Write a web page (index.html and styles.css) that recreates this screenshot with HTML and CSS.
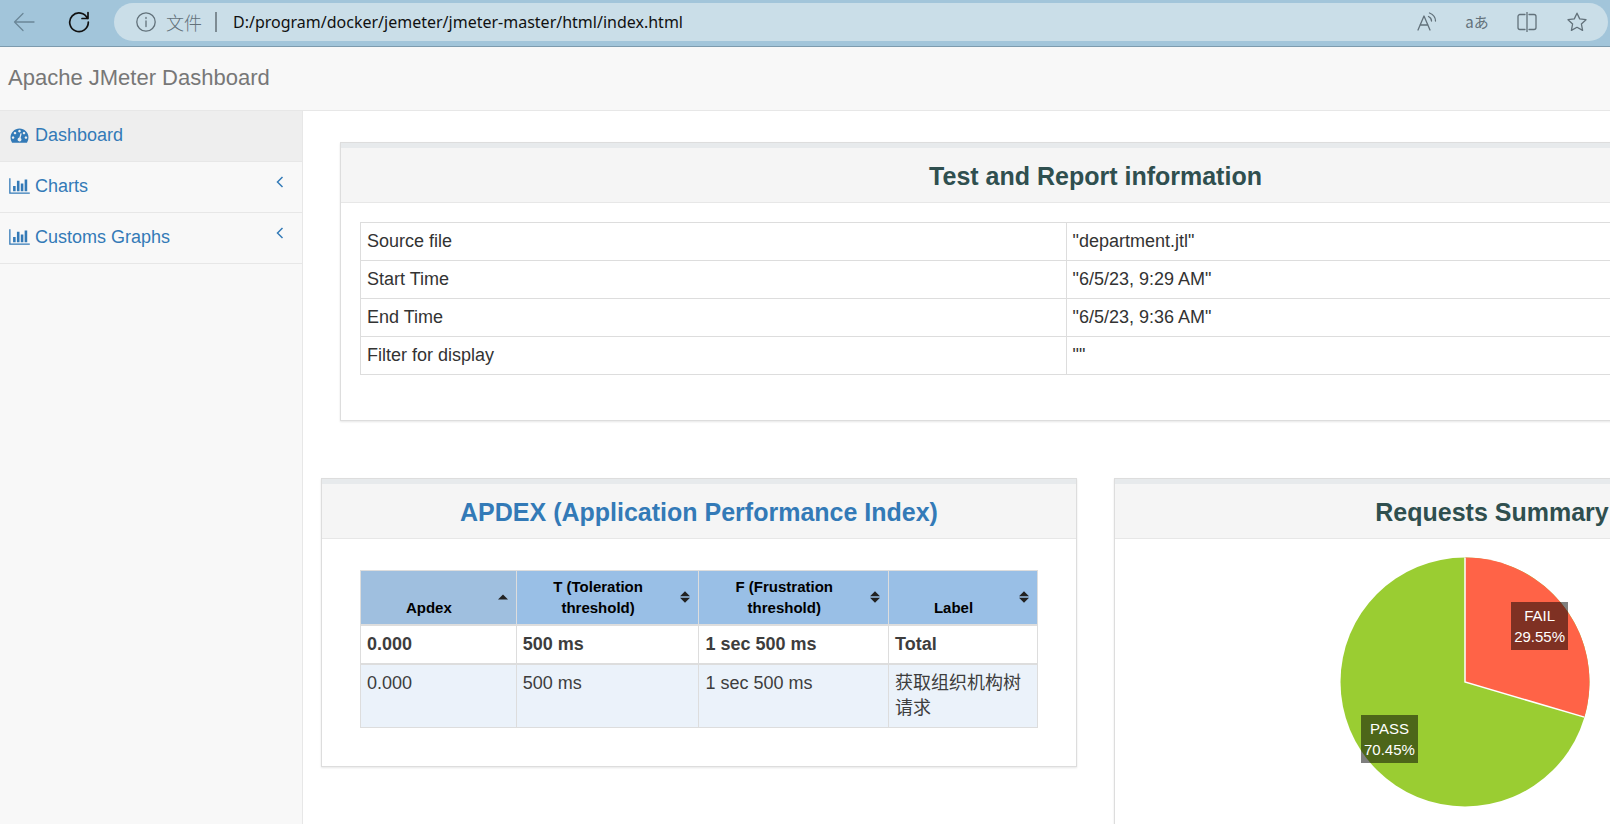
FILE: index.html
```
<!DOCTYPE html>
<html lang="en">
<head>
    <meta charset="UTF-8">
    <meta name="viewport" content="width=device-width, initial-scale=1.0">
    <title>Apache JMeter Dashboard</title>
    <link rel="stylesheet" href="styles.css">
</head>
<body>
    <!-- Browser toolbar -->
    <div class="toolbar">
        <button type="button" class="tool-btn back" aria-label="Back">
            <svg width="22" height="22" viewBox="0 0 22 22"><path d="M21 11H1.500M10 2.500L1.500 11l8.500 8.500"/></svg>
        </button>
        <button type="button" class="tool-btn reload" aria-label="Refresh">
            <svg width="22" height="22" viewBox="0 0 22 22"><path d="M19.500 7.500A9.300 9.300 0 1 0 20.300 11M20 1.500V7.500H14"/></svg>
        </button>
        <div class="address">
            <svg class="info" width="20" height="20" viewBox="0 0 20 20"><circle cx="10" cy="10" r="9.200"/><path d="M10 9v5.500M10 5.500v1"/></svg>
            <label for="url" class="scheme" lang="zh-CN">文件</label>
            <input id="url" type="text" value="D:/program/docker/jemeter/jmeter-master/html/index.html">
            <div class="address-tools">
                <button type="button" class="tool-btn" aria-label="Read aloud">
                    <svg width="20" height="20" viewBox="0 0 20 20"><path d="M1 18L7 4l6 14M3 13h8M11.500 4.500q3 1.500 3 4.500M12.500 1q6 2.500 6 8"/></svg>
                </button>
                <button type="button" class="tool-btn translate" aria-label="Translate">aあ</button>
                <button type="button" class="tool-btn" aria-label="Split screen">
                    <svg width="20" height="20" viewBox="0 0 20 20"><path d="M10 0v20M8 2.500H3a2 2 0 0 0-2 2v11a2 2 0 0 0 2 2h5M12 2.500h5a2 2 0 0 1 2 2v11a2 2 0 0 1-2 2h-5"/></svg>
                </button>
                <button type="button" class="tool-btn" aria-label="Add to favorites">
                    <svg width="20" height="20" viewBox="0 0 20 20"><path d="M10 1.200l2.700 5.700 6.300.8-4.600 4.300 1.200 6.400L10 15.300l-5.600 3.100 1.200-6.400L1 7.700l6.300-.8z"/></svg>
                </button>
            </div>
        </div>
    </div>

    <header class="navbar">
        <a href="index.html" class="brand">Apache JMeter Dashboard</a>
    </header>

    <div class="wrapper">
        <nav class="sidebar">
            <ul>
                <li>
                    <a href="index.html" class="active">
                        <svg class="fa" width="18" height="18" viewBox="0 0 1792 1792"><path d="M384 1152q0-53-37.500-90.500t-90.500-37.500-90.500 37.500-37.500 90.500 37.500 90.500 90.500 37.500 90.500-37.500 37.500-90.500zm192-448q0-53-37.500-90.500t-90.500-37.500-90.500 37.500-37.500 90.500 37.500 90.500 90.500 37.500 90.500-37.500 37.500-90.500zm428 481l101-382q6-26-7.500-48.500t-38.500-29.500-48 6.500-30 39.500l-101 382q-60 5-107 43.500t-63 98.500q-20 77 20 146t117 89 146-20 89-117q16-60-6-117t-72-91zm660-33q0-53-37.500-90.500t-90.500-37.500-90.500 37.500-37.500 90.500 37.500 90.500 90.500 37.500 90.500-37.500 37.500-90.500zm-640-640q0-53-37.500-90.500t-90.500-37.500-90.500 37.500-37.500 90.500 37.500 90.500 90.500 37.500 90.500-37.500 37.500-90.500zm448 192q0-53-37.500-90.500t-90.500-37.500-90.500 37.500-37.500 90.500 37.500 90.500 90.500 37.500 90.500-37.500 37.500-90.500zm320 448q0 261-141 483-19 29-54 29h-1402q-35 0-54-29-141-221-141-483 0-182 71-348t191-286 286-191 348-71 348 71 286 191 191 286 71 348z"/></svg>
                        <span>Dashboard</span>
                    </a>
                </li>
                <li>
                    <a href="#charts">
                        <svg class="fa" width="21" height="18" viewBox="0 0 2048 1792"><path d="M640 896v512h-256v-512h256zm384-512v1024h-256v-1024h256zm1024 1152v128h-2048v-1536h128v1408h1920zm-640-896v768h-256v-768h256zm384-384v1152h-256v-1152h256z"/></svg>
                        <span>Charts</span>
                        <svg class="arrow" width="8" height="12" viewBox="0 0 8 12"><path d="M6.500 1L1.500 6l5 5"/></svg>
                    </a>
                </li>
                <li>
                    <a href="#customs">
                        <svg class="fa" width="21" height="18" viewBox="0 0 2048 1792"><path d="M640 896v512h-256v-512h256zm384-512v1024h-256v-1024h256zm1024 1152v128h-2048v-1536h128v1408h1920zm-640-896v768h-256v-768h256zm384-384v1152h-256v-1152h256z"/></svg>
                        <span>Customs Graphs</span>
                        <svg class="arrow" width="8" height="12" viewBox="0 0 8 12"><path d="M6.500 1L1.500 6l5 5"/></svg>
                    </a>
                </li>
            </ul>
        </nav>

        <main class="page">
            <section class="panel info-panel">
                <h2 class="panel-title">Test and Report information</h2>
                <div class="panel-body">
                    <table class="table info-table">
                        <tbody>
                            <tr><td>Source file</td><td>"department.jtl"</td></tr>
                            <tr><td>Start Time</td><td>"6/5/23, 9:29 AM"</td></tr>
                            <tr><td>End Time</td><td>"6/5/23, 9:36 AM"</td></tr>
                            <tr><td>Filter for display</td><td>""</td></tr>
                        </tbody>
                    </table>
                </div>
            </section>

            <div class="row">
                <section class="panel apdex-panel">
                    <h2 class="panel-title"><a href="#apdex">APDEX (Application Performance Index)</a></h2>
                    <div class="panel-body">
                        <table class="table apdex-table" id="apdex">
                            <colgroup>
                                <col class="col-apdex">
                                <col class="col-t">
                                <col class="col-f">
                                <col class="col-label">
                            </colgroup>
                            <thead>
                                <tr>
                                    <th class="sorted"><div class="sort"><span>Apdex</span><svg width="10" height="12" viewBox="0 0 10 12"><path d="M0 8.500L5 3.500l5 5z"/></svg></div></th>
                                    <th><div class="sort"><span>T (Toleration threshold)</span><svg width="10" height="12" viewBox="0 0 10 12"><path d="M0 5.300L5 .3l5 5zM0 6.700h10l-5 5z"/></svg></div></th>
                                    <th><div class="sort"><span>F (Frustration threshold)</span><svg width="10" height="12" viewBox="0 0 10 12"><path d="M0 5.300L5 .3l5 5zM0 6.700h10l-5 5z"/></svg></div></th>
                                    <th><div class="sort"><span>Label</span><svg width="10" height="12" viewBox="0 0 10 12"><path d="M0 5.300L5 .3l5 5zM0 6.700h10l-5 5z"/></svg></div></th>
                                </tr>
                            </thead>
                            <tbody class="total">
                                <tr><td>0.000</td><td>500 ms</td><td>1 sec 500 ms</td><td>Total</td></tr>
                            </tbody>
                            <tbody>
                                <tr><td>0.000</td><td>500 ms</td><td>1 sec 500 ms</td><td lang="zh-CN">获取组织机构树请求</td></tr>
                            </tbody>
                        </table>
                    </div>
                </section>

                <section class="panel summary-panel">
                    <h2 class="panel-title">Requests Summary</h2>
                    <div class="pie-area">
                        <div class="pie">
                            <svg viewBox="-125 -125 250 250">
                                <circle r="124.500" fill="#9acd32"/>
                                <path d="M0 0V-124.500A124.500 124.500 0 0 1 119.400 35.100z" fill="#ff6347"/>
                                <path d="M0-124.500V0L119.400 35.100" fill="none" stroke="#fff" stroke-width="1.500"/>
                            </svg>
                            <div class="pie-label fail">FAIL<br>29.55%</div>
                            <div class="pie-label pass">PASS<br>70.45%</div>
                        </div>
                    </div>
                </section>
            </div>
        </main>
    </div>
</body>
</html>
```
FILE: styles.css
```
* {
    box-sizing: border-box;
}

body {
    margin: 0;
    height: 100vh;
    display: flex;
    flex-direction: column;
    overflow: hidden;
    font-family: "Liberation Sans", Arial, "Noto Sans CJK SC", sans-serif;
    font-size: 18px;
    line-height: 25px;
    color: #333;
    background-color: #fff;
}

a {
    color: #337ab7;
    text-decoration: none;
}

/* Browser toolbar */
.toolbar {
    display: flex;
    align-items: center;
    height: 47px;
    flex-shrink: 0;
    padding: 0 2px 3px 13px;
    background-color: #a2c5da;
    border-bottom: 1px solid #7d9bae;
}

.tool-btn {
    display: flex;
    align-items: center;
    justify-content: center;
    padding: 0;
    border: none;
    background: none;
    color: #62717a;
    cursor: pointer;
}

.tool-btn svg,
.info {
    fill: none;
    stroke: currentColor;
    stroke-width: 1.3;
    stroke-linecap: round;
    stroke-linejoin: round;
}

.back {
    color: #6b8798;
}

.reload {
    margin-left: 33px;
    color: #111;
}

.reload svg {
    stroke-width: 1.7;
}

.address {
    flex: 1;
    display: flex;
    align-items: center;
    height: 38px;
    margin-left: 24px;
    padding: 0 21px 0 22px;
    border-radius: 19px;
    background-color: #cadee8;
}

.info {
    color: #62717a;
}

.scheme {
    margin-left: 10px;
    padding-right: 13px;
    border-right: 2px solid #7d8b93;
    line-height: 20px;
    font-family: "Noto Sans CJK SC", sans-serif;
    font-weight: 300;
    color: #62717a;
}

.address input {
    flex: 1;
    padding: 0 0 0 16px;
    border: none;
    outline: none;
    background: none;
    font-family: "Noto Sans", sans-serif;
    font-size: 16px;
    color: #111;
}

.address-tools {
    display: flex;
    gap: 30px;
}

.translate {
    width: 20px;
    white-space: nowrap;
    font-family: "Noto Sans CJK JP", sans-serif;
    font-size: 15px;
}

/* Top bar */
.navbar {
    height: 64px;
    flex-shrink: 0;
    padding: 0 8px;
    background-color: #f8f8f8;
    border-bottom: 1px solid #e7e7e7;
}

.brand {
    font-size: 22px;
    line-height: 62px;
    color: #777;
}

.wrapper {
    flex: 1;
    display: flex;
    min-height: 0;
}

/* Sidebar */
.sidebar {
    width: 303px;
    flex-shrink: 0;
    background-color: #f8f8f8;
    border-right: 1px solid #e7e7e7;
}

.sidebar ul {
    margin: 0;
    padding: 0;
    list-style: none;
}

.sidebar li {
    border-bottom: 1px solid #e7e7e7;
}

.sidebar a {
    display: flex;
    align-items: center;
    height: 50px;
    padding: 0 18px 2px 8px;
}

.sidebar a.active {
    background-color: #eee;
}

.fa {
    width: 23px;
    margin-right: 4px;
    fill: #337ab7;
}

.arrow {
    margin: 0 0 8px auto;
    fill: none;
    stroke: #337ab7;
    stroke-width: 1.5;
}

/* The report is wider than the window and is cut at the right edge */
.page {
    flex: 1 0 1585px;
    padding: 31px 18px 0;
    overflow: hidden;
}

.panel {
    border: 1px solid #ddd;
    background-color: #fff;
    box-shadow: 0 1px 2px rgba(0, 0, 0, 0.1);
}

.panel-title {
    margin: 0;
    padding: 15px 18px 13px;
    border-top: 5px solid #e7eaec;
    border-bottom: 1px solid #e7e7e7;
    background-color: #f5f5f5;
    font-size: 25px;
    line-height: 26px;
    text-align: center;
    color: #2f4f4f;
}

.info-panel {
    margin: 0 19px 57px;
}

.info-panel .panel-body {
    padding: 19px 19px 45px;
}

.row {
    display: grid;
    grid-template-columns: 1fr 1fr;
    align-items: start;
    gap: 37px;
}

.apdex-panel .panel-body {
    padding: 31px 38px 38px;
}

/* Tables */
.table {
    width: 100%;
    border-collapse: collapse;
    table-layout: fixed;
}

.table td,
.table th {
    padding: 6px;
    border: 1px solid #ddd;
    text-align: left;
    vertical-align: top;
}

.info-table td:first-child {
    width: 48%;
}

.col-apdex { width: 23%; }
.col-t { width: 27%; }
.col-f { width: 28%; }
.col-label { width: 22%; }

.apdex-table {
    color: #3d3d3d;
}

.apdex-table th {
    padding: 5px 8px 6px 6px;
    border-bottom-width: 2px;
    background-color: #99bfe6;
    font-size: 15px;
    line-height: 21px;
    color: #000;
}

.apdex-table th.sorted {
    background-color: #9fbfdf;
}

.sort {
    display: flex;
    align-items: flex-end;
    min-height: 42px;
    gap: 7px;
}

.sort span {
    flex: 1;
    text-align: center;
}

.sort svg {
    align-self: center;
    fill: #222;
}

.total td {
    font-weight: bold;
    border-bottom-width: 2px;
}

.apdex-table tbody:last-child td {
    background-color: #ebf2fa;
}

/* Pie chart */
.summary-panel {
    min-height: 400px;
}

.pie-area {
    display: flex;
    justify-content: center;
    padding: 18px 54px 18px 0;
}

.pie {
    position: relative;
    width: 250px;
    height: 250px;
}

.pie svg {
    display: block;
}

.pie-label {
    position: absolute;
    padding: 3px;
    background-color: rgba(0, 0, 0, 0.5);
    font-size: 15px;
    line-height: 21px;
    text-align: center;
    color: #fff;
}

.fail {
    top: 45px;
    right: 22px;
}

.pass {
    bottom: 44px;
    left: 21px;
}
```
